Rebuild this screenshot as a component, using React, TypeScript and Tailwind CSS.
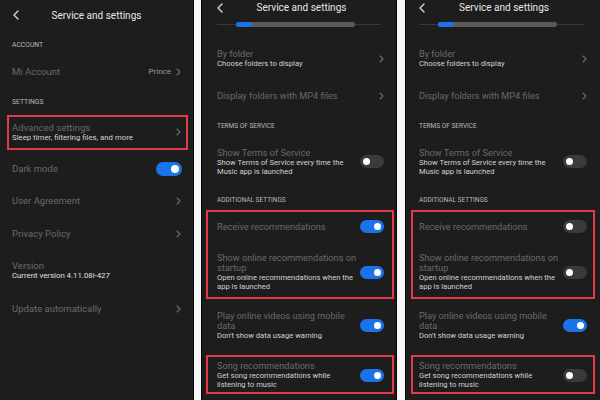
import React from "react";

const Chevron = () => (
  <svg width="5" height="8" viewBox="0 0 5 8" className="shrink-0">
    <path d="M1 1 L4 4 L1 7" fill="none" stroke="#6c6c6c" strokeWidth="1.1" strokeLinecap="round" strokeLinejoin="round" />
  </svg>
);

const Back = () => (
  <svg width="6" height="10" viewBox="0 0 6 10" className="shrink-0">
    <path d="M5 1 L1 5 L5 9" fill="none" stroke="#d6d6d6" strokeWidth="1.4" strokeLinecap="round" strokeLinejoin="round" />
  </svg>
);

function Toggle({ on, big }: { on: boolean; big?: boolean }) {
  const size = big ? "w-[26px] h-[14px]" : "w-[24px] h-[13px]";
  const knob = big ? "w-[8px] h-[8px]" : "w-[7px] h-[7px]";
  return (
    <div
      className={`${size} shrink-0 rounded-full flex items-center px-[3px] ${
        on ? "bg-[#1a73e8] justify-end" : "bg-[#3a3a3a] justify-start"
      }`}
    >
      <div className={`${knob} rounded-full bg-white`} />
    </div>
  );
}

const T1 = "text-[9.5px] leading-[11px] text-[#6a6a6a] whitespace-nowrap";
const S1 = "text-[7.8px] leading-[9px] text-[#d2d2d2] whitespace-nowrap";
const H1 = "text-[6.8px] leading-[9px] text-[#b8b8b8] whitespace-nowrap";

function Panel1() {
  return (
    <div className="w-[194px] h-full shrink-0 bg-[#1d1d1d] border-r border-black flex flex-col">
      <div className="h-[30px] flex items-center pl-[13px] pr-[19px]">
        <Back />
        <div className="flex-1 text-center text-[10px] text-[#e6e6e6]">Service and settings</div>
      </div>
      <div className={`mt-[11px] px-[12px] ${H1}`}>ACCOUNT</div>
      <div className="mt-[16px] px-[12px] h-[11px] flex items-center justify-between">
        <span className={T1}>Mi Account</span>
        <span className="flex items-center gap-[5px]">
          <span className="text-[8px] leading-[11px] text-[#9a9a9a]">Prince</span>
          <Chevron />
        </span>
      </div>
      <div className={`mt-[21px] px-[12px] ${H1}`}>SETTINGS</div>
      <div className="mt-[8px] ml-[7px] mr-[5px] border-2 border-[#e23b46] pt-[5px] pb-[6px] pl-[3px] pr-[5px] flex items-center justify-between">
        <div className="flex flex-col">
          <span className={T1}>Advanced settings</span>
          <span className={S1}>Sleep timer, filtering files, and more</span>
        </div>
        <Chevron />
      </div>
      <div className="mt-[13px] pl-[12px] pr-[11px] h-[11px] flex items-center justify-between">
        <span className={T1}>Dark mode</span>
        <Toggle on big />
      </div>
      <div className="mt-[21px] px-[12px] h-[11px] flex items-center justify-between">
        <span className={T1}>User Agreement</span>
        <Chevron />
      </div>
      <div className="mt-[22px] px-[12px] h-[11px] flex items-center justify-between">
        <span className={T1}>Privacy Policy</span>
        <Chevron />
      </div>
      <div className="mt-[21px] px-[12px] flex flex-col">
        <span className={T1}>Version</span>
        <span className={`${S1} text-[#e0e0e0]`}>Current version 4.11.08i-427</span>
      </div>
      <div className="mt-[23px] px-[12px] h-[11px] flex items-center justify-between">
        <span className={T1}>Update automatically</span>
        <Chevron />
      </div>
    </div>
  );
}

const T2 = "text-[9.2px] leading-[10px] text-[#6a6a6a] whitespace-nowrap";
const S2 = "text-[7.6px] leading-[9px] text-[#d2d2d2] whitespace-nowrap";
const H2 = "text-[6.5px] leading-[9px] text-[#b8b8b8] whitespace-nowrap";

function Panel2({
  recOn,
  outer,
  pad,
  box,
}: {
  recOn: boolean;
  outer: string;
  pad: string;
  box: string;
}) {
  return (
    <div className={`${outer} h-full shrink-0 bg-[#1d1d1d] flex flex-col ${pad}`}>
      <div className="h-[16px] flex items-center">
        <Back />
        <div className="flex-1 text-center text-[10px] leading-[16px] text-[#e6e6e6] pr-[4px]">Service and settings</div>
      </div>
      <div className="h-[16px] flex items-center">
        <div className="relative w-full h-[5px]">
          <div className="absolute left-0 right-[3px] top-[2px] h-[1px] bg-[#3a3a3a]" />
          <div className="absolute left-[19px] w-[119px] h-[5px] rounded-full bg-[#5a5a5a]" />
          <div className="absolute left-[19px] w-[16px] h-[5px] rounded-full bg-[#1a73e8]" />
        </div>
      </div>
      <div className="mt-[16px] flex items-center justify-between">
        <div className="flex flex-col">
          <span className={`${T2} leading-[11px]`}>By folder</span>
          <span className={`${S2} leading-[10px]`}>Choose folders to display</span>
        </div>
        <Chevron />
      </div>
      <div className="mt-[21px] h-[11px] flex items-center justify-between">
        <span className={`${T2} leading-[11px]`}>Display folders with MP4 files</span>
        <Chevron />
      </div>
      <div className={`mt-[21px] ${H2}`}>TERMS OF SERVICE</div>
      <div className="mt-[16px] flex items-center justify-between">
        <div className="flex flex-col">
          <span className={`${T2} leading-[11px]`}>Show Terms of Service</span>
          <span className={S2}>Show Terms of Service every time the</span>
          <span className={S2}>Music app is launched</span>
        </div>
        <Toggle on={false} />
      </div>
      <div className={`mt-[20px] ${H2}`}>ADDITIONAL SETTINGS</div>
      <div className={`mt-[5px] border-2 border-[#e23b46] pt-[9px] pb-[6px] flex flex-col ${box}`}>
        <div className="h-[11px] flex items-center justify-between">
          <span className={`${T2} leading-[11px]`}>Receive recommendations</span>
          <Toggle on={recOn} />
        </div>
        <div className="mt-[21px] flex items-center justify-between">
          <div className="flex flex-col">
            <span className={T2}>Show online recommendations on</span>
            <span className={T2}>startup</span>
            <span className={S2}>Open online recommendations when the</span>
            <span className={S2}>app is launched</span>
          </div>
          <Toggle on={recOn} />
        </div>
      </div>
      <div className="mt-[12px] flex items-center justify-between">
        <div className="flex flex-col">
          <span className={T2}>Play online videos using mobile</span>
          <span className={T2}>data</span>
          <span className={S2}>Don't show data usage warning</span>
        </div>
        <Toggle on />
      </div>
      <div className={`mt-[15px] border-2 border-[#e23b46] pt-[4px] pb-[3px] flex items-center justify-between ${box}`}>
        <div className="flex flex-col">
          <span className={T2}>Song recommendations</span>
          <span className={S2}>Get song recommendations while</span>
          <span className={S2}>listening to music</span>
        </div>
        <Toggle on={recOn} />
      </div>
    </div>
  );
}

export default function App() {
  return (
    <div className="w-[600px] h-[400px] overflow-hidden bg-[#f7f7f7] flex font-[Roboto,sans-serif]">
      <Panel1 />
      <div className="w-[7px] shrink-0" />
      <Panel2
        recOn
        outer="w-[196px] border-x border-black"
        pad="pl-[15px] pr-[12px]"
        box="-ml-[11px] -mr-[10px] pl-[9px] pr-[8px]"
      />
      <div className="w-[8px] shrink-0" />
      <Panel2
        recOn={false}
        outer="w-[195px] border-l border-black"
        pad="pl-[13px] pr-[13px]"
        box="-mx-[8px] px-[6px]"
      />
    </div>
  );
}
